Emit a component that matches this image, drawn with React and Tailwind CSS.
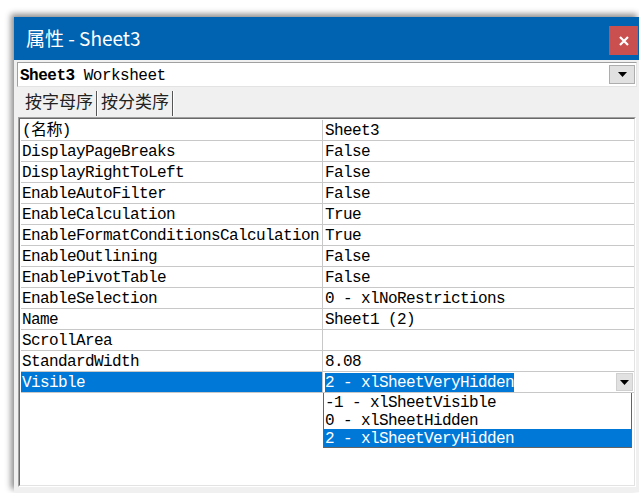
import React from "react";

const rows = [
  ["(名称)", "Sheet3"],
  ["DisplayPageBreaks", "False"],
  ["DisplayRightToLeft", "False"],
  ["EnableAutoFilter", "False"],
  ["EnableCalculation", "True"],
  ["EnableFormatConditionsCalculation", "True"],
  ["EnableOutlining", "False"],
  ["EnablePivotTable", "False"],
  ["EnableSelection", "0 - xlNoRestrictions"],
  ["Name", "Sheet1 (2)"],
  ["ScrollArea", ""],
  ["StandardWidth", "8.08"],
];

const mono = "font-['Liberation_Mono','Noto_Sans_CJK_SC',monospace]";

function Arrow() {
  return (
    <svg width="9" height="5" viewBox="0 0 9 5">
      <path d="M0 0 H9 L4.5 5 Z" fill="#000" />
    </svg>
  );
}

export default function App() {
  return (
    <div className="w-[639px] h-[493px] bg-white overflow-hidden relative">
      <div className="absolute left-[14px] top-[17px] w-[626px] h-[475px] bg-[#f0f0f0] shadow-[-3px_-3px_6px_rgba(0,0,0,0.45)] flex flex-col">
        {/* title bar */}
        <div className="h-[43px] bg-[#0063b1] flex items-start justify-between shrink-0">
          <div className="pl-[12px] pt-[8px] text-white text-[19px] leading-[26px] font-['Noto_Sans_CJK_SC',sans-serif]">
            属性 - Sheet3
          </div>
          <div className="mt-[9px] mr-[2px] w-[29px] h-[29px] bg-[#c9504f] flex items-center justify-center">
            <svg width="10" height="10" viewBox="0 0 10 10">
              <path d="M1 1 L9 9 M9 1 L1 9" stroke="#fff" strokeWidth="2.2" />
            </svg>
          </div>
        </div>
        {/* combobox */}
        <div className="mt-[2px] ml-[3px] mr-[3px] h-[25px] bg-white border border-[#a0a0a0] border-b-[#e3e3e3] border-r-[#e3e3e3] flex items-center shrink-0">
          <div className={`${mono} text-[16px] tracking-[-0.5px] leading-[20px] pl-[2px] pt-[2px] flex-1 text-black`}>
            <span className="font-bold">Sheet3</span> Worksheet
          </div>
          <div className="w-[26px] h-[19px] mr-[1px] bg-[#e1e1e1] border border-[#adadad] flex items-center justify-center">
            <Arrow />
          </div>
        </div>
        {/* tabs */}
        <div className={`h-[29px] ml-[4px] flex items-end ${mono} text-[17px] text-[#222] shrink-0`}>
          <div className="h-[25px] flex items-center pl-[7px] pr-[3px] border-r border-[#555]">按字母序</div>
          <div className="h-[25px] flex items-center pl-[3px] pr-[3px] border-l border-white border-r border-r-[#555]">按分类序</div>
          <div className="h-[25px] border-l border-white"></div>
        </div>
        {/* grid */}
        <div className="mt-[1px] ml-[4px] mr-[4px] h-[370px] border border-[#a0a0a0] border-b-white border-r-white">
          <div className="h-full border border-[#696969] border-b-[#e3e3e3] border-r-[#e3e3e3] bg-white relative">
            <div className={`${mono} text-[16px] tracking-[-0.6px] text-black pl-[1px] pt-[1px]`}>
              {rows.map(([k, v]) => (
                <div key={k} className="flex h-[21px] border-b border-[#c8c8c8]">
                  <div className="w-[302px] pl-[1px] pt-[2px] leading-[18px] border-r border-[#c8c8c8] whitespace-nowrap overflow-hidden">{k}</div>
                  <div className="flex-1 pl-[2px] pt-[2px] leading-[18px] whitespace-nowrap">{v}</div>
                </div>
              ))}
              <div className="flex h-[21px] border-b border-[#c8c8c8]">
                <div className="w-[302px] pl-[1px] pt-[2px] leading-[18px] bg-[#0078d7] text-white border-r border-[#c8c8c8]">Visible</div>
                <div className="flex-1 flex items-center pl-[2px] pr-[1px]">
                  <span className="bg-[#0078d7] text-white leading-[18px] pt-[1px] flex-none">2 - xlSheetVeryHidden</span>
                  <div className="flex-1" />
                  <div className="w-[17px] h-[18px] bg-[#e1e1e1] border border-[#d0d0d0] flex items-center justify-center">
                    <Arrow />
                  </div>
                </div>
              </div>
            </div>
            {/* dropdown list */}
            <div className={`absolute left-[303px] top-[274px] w-[309px] border border-[#646464] border-t-0 bg-white ${mono} text-[16px] tracking-[-0.6px] text-black`}>
              <div className="h-[18px] leading-[18px] pt-[1px] pl-[1px]">-1 - xlSheetVisible</div>
              <div className="h-[18px] leading-[18px] pt-[1px] pl-[1px]">0 - xlSheetHidden</div>
              <div className="h-[18px] leading-[18px] pt-[1px] pl-[1px] bg-[#0078d7] text-white">2 - xlSheetVeryHidden</div>
            </div>
          </div>
        </div>
      </div>
    </div>
  );
}
